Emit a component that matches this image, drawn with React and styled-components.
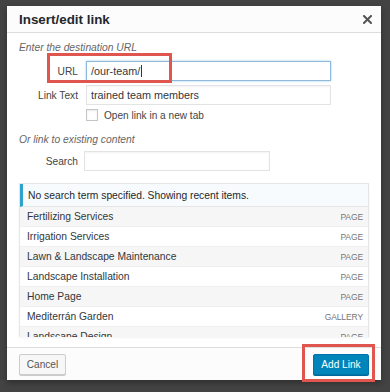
import React from "react";
import styled, { createGlobalStyle } from "styled-components";

const Global = createGlobalStyle`
  html, body { margin: 0; padding: 0; }
  body {
    background: #434343;
    font-family: "Liberation Sans", Arial, sans-serif;
    color: #32373c;
  }
  * { box-sizing: border-box; }
`;

const Page = styled.div`
  width: 390px;
  height: 392px;
  padding: 6px 9px 0 7px;
  overflow: hidden;
`;

const Dialog = styled.div`
  position: relative;
  width: 374px;
  height: 374px;
  background: #fff;
  box-shadow: 0 3px 6px rgba(0, 0, 0, 0.3);
  display: flex;
  flex-direction: column;
`;

const Header = styled.div`
  height: 27px;
  flex: none;
  display: flex;
  align-items: center;
  justify-content: space-between;
  padding: 0 9px 0 12px;
  background: #fcfcfc;
  border-bottom: 1px solid #dddddd;
`;

const Title = styled.h1`
  margin: 0;
  font-size: 13.4px;
  font-weight: 600;
  color: #23282d;
`;

const CloseButton = styled.button`
  border: 0;
  padding: 0;
  background: none;
  width: 10px;
  height: 10px;
  display: flex;
  align-items: center;
  justify-content: center;
  cursor: pointer;
`;

const Body = styled.div`
  flex: 1;
  min-height: 0;
  display: flex;
  flex-direction: column;
  padding: 9px 12px 10px 12px;
`;

const Hint = styled.p`
  margin: ${(p) => p.$mt || 0}px 0 0;
  font-size: 10.3px;
  line-height: 12px;
  font-style: italic;
  color: #666;
`;

const Form = styled.div`
  margin-top: ${(p) => p.$mt || 0}px;
  display: flex;
  flex-direction: column;
  gap: 4px;
`;

const Row = styled.div`
  position: relative;
  display: grid;
  grid-template-columns: 59px ${(p) => p.$w || 245}px;
  column-gap: ${(p) => p.$gap || 8}px;
  align-items: center;
`;

const Label = styled.label`
  text-align: right;
  font-size: 10.2px;
  color: #444;
`;

const Input = styled.div`
  height: 20px;
  display: flex;
  align-items: center;
  padding: 0 4px;
  font-size: 10.8px;
  color: #32373c;
  background: #fff;
  border: 1px solid ${(p) => (p.$focus ? "#8fb9dd" : "#e3e3e3")};
  box-shadow: ${(p) =>
    p.$focus
      ? "0 0 2px rgba(30, 140, 190, 0.45)"
      : "inset 0 1px 2px rgba(0, 0, 0, 0.05)"};
`;

const Caret = styled.span`
  display: inline-block;
  width: 1px;
  height: 12px;
  margin-left: 1px;
  background: #32373c;
`;

const CheckRow = styled.label`
  margin-left: 67px;
  display: flex;
  align-items: center;
  gap: 6px;
  height: 12px;
  font-size: 10.1px;
  color: #444;
`;

const Checkbox = styled.span`
  width: 12px;
  height: 12px;
  border: 1px solid #c3c6c9;
  background: #fff;
  box-shadow: inset 0 1px 2px rgba(0, 0, 0, 0.08);
`;

const Highlight = styled.span`
  position: absolute;
  left: ${(p) => p.$l}px;
  top: ${(p) => p.$t}px;
  width: ${(p) => p.$w}px;
  height: ${(p) => p.$h}px;
  border: 3px solid #e0564f;
  pointer-events: none;
`;

const Results = styled.div`
  margin-top: 12px;
  flex: 1;
  min-height: 0;
  overflow: hidden;
  border: 1px solid #e6e6e6;
  border-bottom: 0;
  box-shadow: 0 1px 2px rgba(0, 0, 0, 0.05);
`;

const Notice = styled.div`
  height: 23px;
  display: flex;
  align-items: center;
  padding-left: 5px;
  border-left: 3px solid #2ea2cc;
  border-bottom: 1px solid #e6e6e6;
  background: #f7fbfd;
  font-size: 10.3px;
  color: #23282d;
`;

const List = styled.ul`
  list-style: none;
  margin: 0;
  padding: 0;
`;

const Item = styled.li`
  height: 20px;
  display: flex;
  align-items: center;
  justify-content: space-between;
  padding: 0 5px 0 7px;
  background: ${(p) => (p.$alt ? "#f6f6f6" : "#ffffff")};
  border-bottom: 1px solid #f0f0f0;
  font-size: 10.3px;
  color: #32373c;
`;

const ItemType = styled.span`
  font-size: 8.5px;
  text-transform: uppercase;
  color: #72777c;
  letter-spacing: -0.1px;
`;

const Footer = styled.div`
  height: 33px;
  flex: none;
  display: flex;
  align-items: center;
  justify-content: space-between;
  padding: 0 12px 0 12px;
  background: #fcfcfc;
  border-top: 1px solid #dddddd;
`;

const ButtonWrap = styled.div`
  position: relative;
  display: flex;
`;

const Button = styled.button`
  height: 21px;
  width: ${(p) => p.$w}px;
  padding: 0;
  border-radius: 2px;
  font-family: inherit;
  font-size: 10.1px;
  line-height: 19px;
  cursor: pointer;
  border: 1px solid ${(p) => (p.$primary ? "#0073aa" : "#cccccc")};
  background: ${(p) => (p.$primary ? "#0085ba" : "#f7f7f7")};
  color: ${(p) => (p.$primary ? "#ffffff" : "#555555")};
  box-shadow: 0 1px 0 ${(p) => (p.$primary ? "#006799" : "#cccccc")};
`;

const items = [
  ["Fertilizing Services", "Page"],
  ["Irrigation Services", "Page"],
  ["Lawn & Landscape Maintenance", "Page"],
  ["Landscape Installation", "Page"],
  ["Home Page", "Page"],
  ["Mediterrán Garden", "Gallery"],
  ["Landscape Design", "Page"],
  ["About Us", "Page"],
];

export default function App() {
  return (
    <>
      <Global />
      <Page>
        <Dialog>
          <Header>
            <Title>Insert/edit link</Title>
            <CloseButton aria-label="Close">
              <svg width="9" height="9" viewBox="0 0 9 9">
                <path
                  d="M1 1 L8 8 M8 1 L1 8"
                  stroke="#555"
                  strokeWidth="2"
                  strokeLinecap="square"
                />
              </svg>
            </CloseButton>
          </Header>
          <Body>
            <Hint>Enter the destination URL</Hint>
            <Form $mt={7}>
              <Row>
                <Label>URL</Label>
                <Input $focus>
                  /our-team/
                  <Caret />
                </Input>
                <Highlight $l={28} $t={-8} $w={125} $h={30} />
              </Row>
              <Row>
                <Label>Link Text</Label>
                <Input>trained team members</Input>
              </Row>
              <CheckRow>
                <Checkbox />
                Open link in a new tab
              </CheckRow>
            </Form>
            <Hint $mt={13}>Or link to existing content</Hint>
            <Form $mt={5}>
              <Row $w={186} $gap={6}>
                <Label>Search</Label>
                <Input />
              </Row>
            </Form>
            <Results>
              <Notice>No search term specified. Showing recent items.</Notice>
              <List>
                {items.map(([name, type], i) => (
                  <Item key={name} $alt={i % 2 === 0}>
                    <span>{name}</span>
                    <ItemType>{type}</ItemType>
                  </Item>
                ))}
              </List>
            </Results>
          </Body>
          <Footer>
            <Button $w={47}>Cancel</Button>
            <ButtonWrap>
              <Button $primary $w={56}>
                Add Link
              </Button>
              <Highlight $l={-11} $t={-10} $w={73} $h={38} />
            </ButtonWrap>
          </Footer>
        </Dialog>
      </Page>
    </>
  );
}
